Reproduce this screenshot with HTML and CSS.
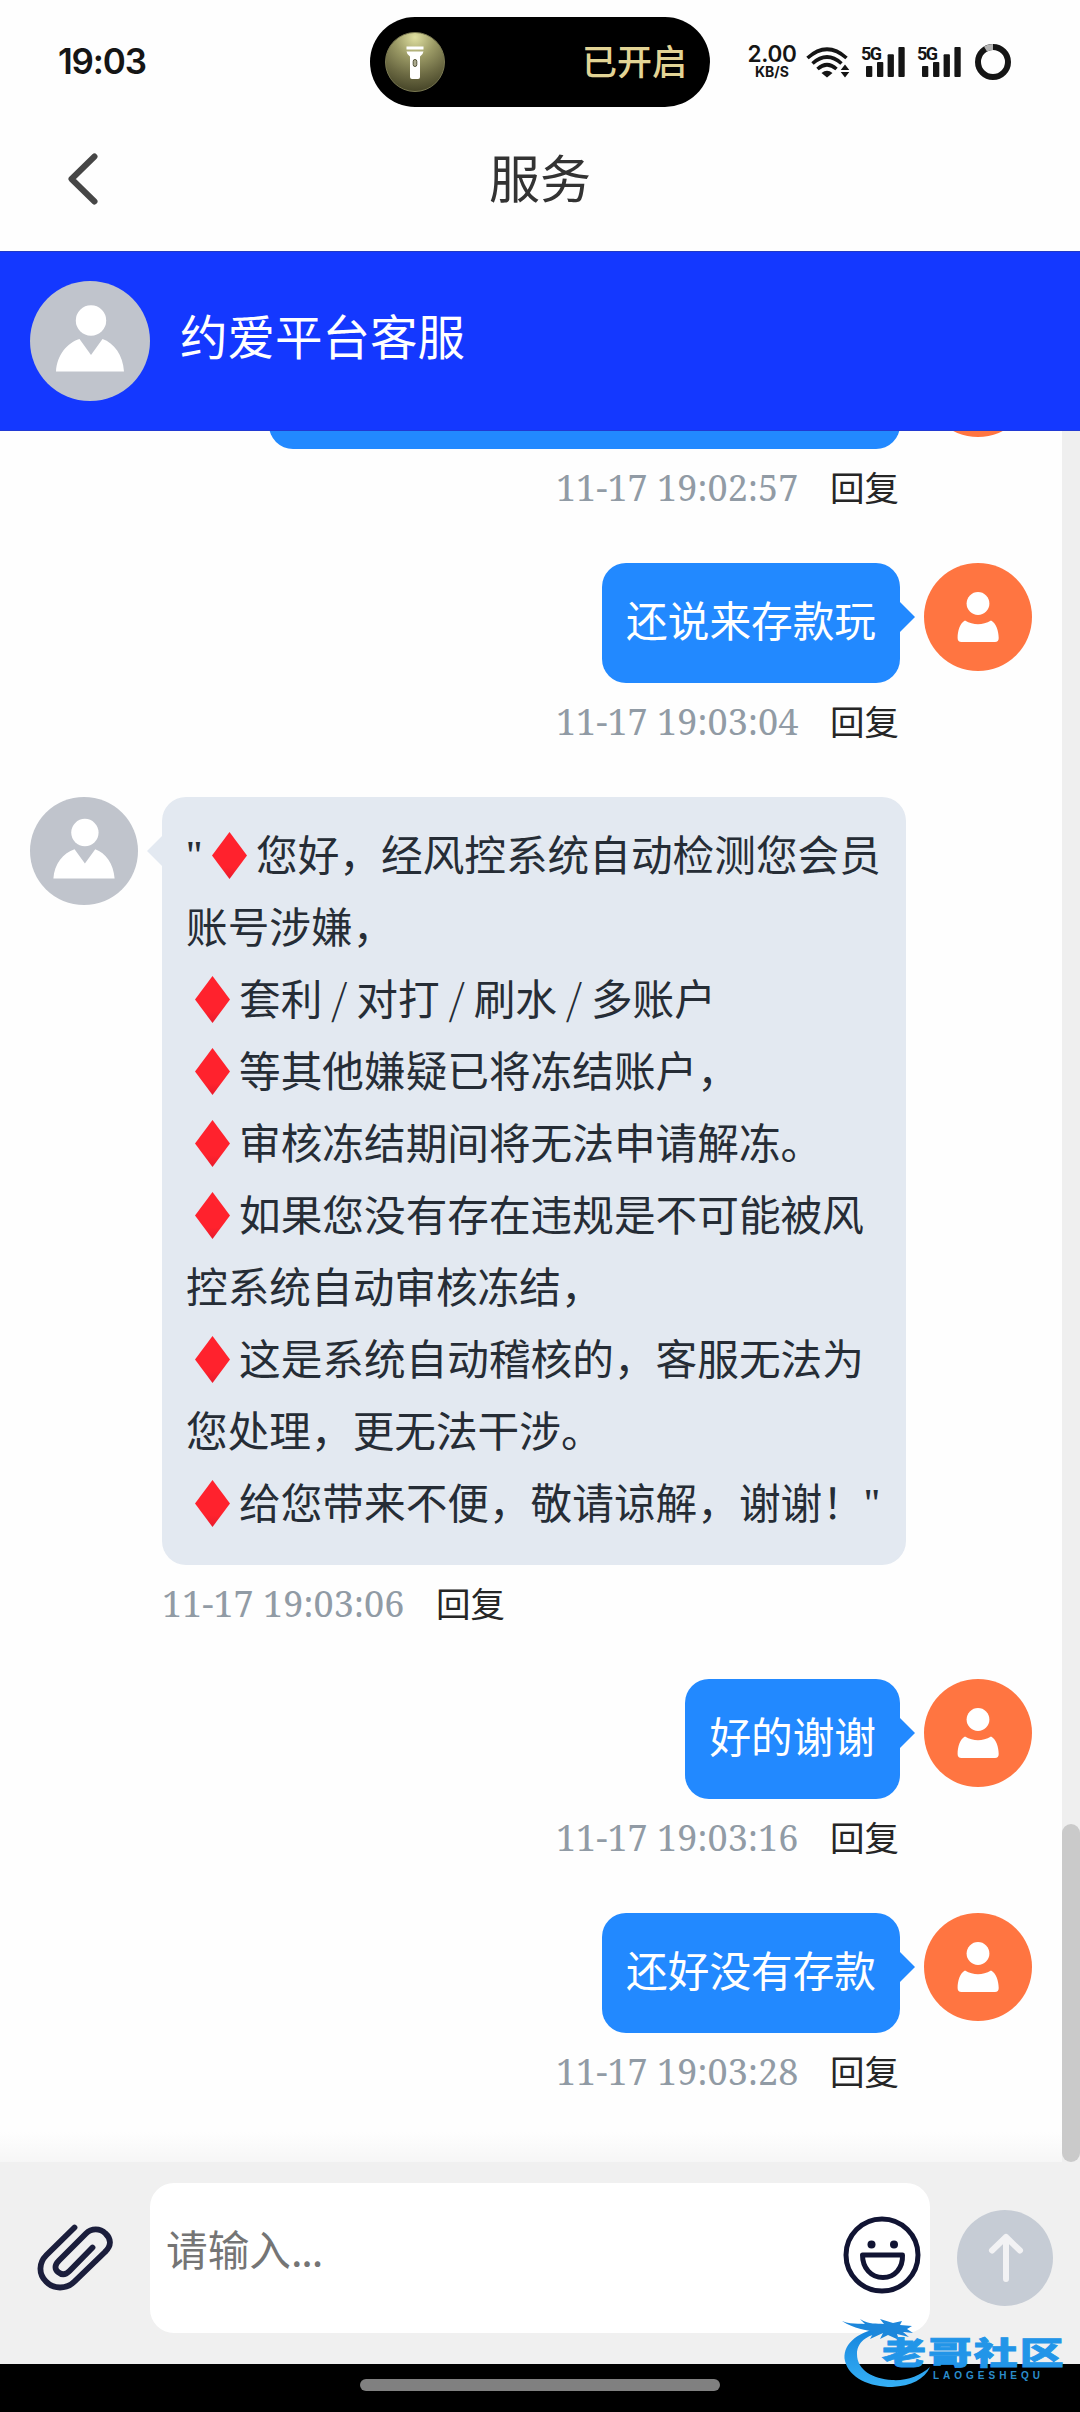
FILE: index.html
```html
<!DOCTYPE html>
<html lang="zh-CN">
<head>
<meta charset="utf-8">
<title>服务</title>
<link rel="stylesheet" href="styles.css">
</head>
<body>
<svg class="defs" aria-hidden="true">
  <symbol id="agent" viewBox="0 0 120 120">
    <circle cx="60" cy="60" r="60" fill="#c0c4cc"/>
    <circle cx="61" cy="39.5" r="15.2" fill="#fff"/>
    <path d="M26 90.500C27 74 37 62 49.500 58L61 74L72.500 58C84 62 93 74 94 90.500Z" fill="#fff"/>
  </symbol>
  <symbol id="user" viewBox="0 0 108 108">
    <circle cx="54" cy="54" r="54" fill="#ff7541"/>
    <circle cx="54" cy="40.500" r="11.400" fill="#fff"/>
    <path d="M41 57.500Q54 65 67 57.500C72 60 74.700 68 74.700 75Q74.700 79 71 79H37.500Q33.600 79 33.600 75C33.600 68 36 60 41 57.500Z" fill="#fff"/>
  </symbol>
  <symbol id="signal" viewBox="0 0 39 30">
    <g fill="#151515">
      <rect x="0" y="19" width="6.300" height="11" rx="1"/>
      <rect x="11" y="15" width="6.300" height="15" rx="1"/>
      <rect x="21.600" y="7.300" width="6.300" height="22.700" rx="1"/>
      <rect x="32.400" y="0" width="6.300" height="30" rx="1"/>
    </g>
  </symbol>
</svg>
<div class="screen">
  <header class="status">
    <div class="clock">19:03</div>
    <div class="island">
      <svg class="torch" viewBox="0 0 60 60">
        <defs>
          <radialGradient id="glow" cx=".5" cy=".08" r="1"><stop offset="0" stop-color="#dfdfa0"/><stop offset=".35" stop-color="#9a9965"/><stop offset=".65" stop-color="#6c6a43"/><stop offset="1" stop-color="#3b3a20"/></radialGradient>
        </defs>
        <circle cx="30" cy="30" r="29.500" fill="url(#glow)" stroke="#7a7952"/>
        <path d="M21.500 14.500H38.500V17.500H21.500ZM21.500 19.500H38.500Q38.300 22 35 24.500V45Q35 47 33 47H27Q25 47 25 45V24.500Q21.700 22 21.500 19.500Z" fill="#fff"/>
        <rect x="28.200" y="27.500" width="3.600" height="7" rx="1.800" fill="#aaa98d" stroke="#55543a"/>
      </svg>
      <span>已开启</span>
    </div>
    <div class="speed"><b>2.00</b><i>KB/S</i></div>
    <svg class="wifi" viewBox="0 0 46 34">
      <g fill="none" stroke="#151515" stroke-width="3.600">
        <path d="M1.500 12Q21 -5.500 40.500 12"/>
        <path d="M6.500 17.500Q21 4.500 35.500 17.500"/>
        <path d="M11.500 23Q21 14.500 30.500 23"/>
      </g>
      <path d="M15.500 27Q21 22.500 26.500 27L21 31.500ZM39 18.500L43.300 24H34.700ZM39 31.500L43.300 26H34.700Z" fill="#151515"/>
    </svg>
    <div class="cell"><svg><use href="#signal"/></svg><span>5G</span></div>
    <div class="cell"><svg><use href="#signal"/></svg><span>5G</span></div>
    <svg class="ring" viewBox="0 0 36 36"><circle cx="18" cy="18" r="15" fill="none" stroke="#151515" stroke-width="6"/><path d="M10.500 5A15 15 0 0 1 18 3" fill="none" stroke="#b4b4b4" stroke-width="6"/></svg>
  </header>

  <nav class="titlebar">
    <svg class="back" viewBox="0 0 30 52"><path d="M26.500 3.500L3.500 26L26.500 48.500" fill="none" stroke="#464646" stroke-width="6" stroke-linecap="round" stroke-linejoin="round"/></svg>
    <h1>服务</h1>
  </nav>

  <section class="agentbar">
    <svg><use href="#agent"/></svg>
    <span>约爱平台客服</span>
  </section>

  <main class="chat">
    <div class="messages">
      <article class="msg mine">
        <div class="row"><div class="bubble long"></div><svg class="avatar"><use href="#user"/></svg></div>
        <div class="meta"><time>11-17 19:02:57</time><span>回复</span></div>
      </article>
      <article class="msg mine">
        <div class="row"><div class="bubble">还说来存款玩</div><svg class="avatar"><use href="#user"/></svg></div>
        <div class="meta"><time>11-17 19:03:04</time><span>回复</span></div>
      </article>
      <article class="msg theirs">
        <div class="row">
          <svg class="avatar"><use href="#agent"/></svg>
          <div class="bubble">
            <p><q>"</q><i class="gem"></i>您好，经风控系统自动检测您会员</p>
            <p>账号涉嫌，</p>
            <p><i class="gem"></i>套利<s>/</s>对打<s>/</s>刷水<s>/</s>多账户</p>
            <p><i class="gem"></i>等其他嫌疑已将冻结账户，</p>
            <p><i class="gem"></i>审核冻结期间将无法申请解冻。</p>
            <p><i class="gem"></i>如果您没有存在违规是不可能被风</p>
            <p>控系统自动审核冻结，</p>
            <p><i class="gem"></i>这是系统自动稽核的，客服无法为</p>
            <p>您处理，更无法干涉。</p>
            <p><i class="gem"></i>给您带来不便，敬请谅解，谢谢！<q>"</q></p>
          </div>
        </div>
        <div class="meta"><time>11-17 19:03:06</time><span>回复</span></div>
      </article>
      <article class="msg mine">
        <div class="row"><div class="bubble">好的谢谢</div><svg class="avatar"><use href="#user"/></svg></div>
        <div class="meta"><time>11-17 19:03:16</time><span>回复</span></div>
      </article>
      <article class="msg mine">
        <div class="row"><div class="bubble">还好没有存款</div><svg class="avatar"><use href="#user"/></svg></div>
        <div class="meta"><time>11-17 19:03:28</time><span>回复</span></div>
      </article>
    </div>
    <div class="track"><div class="thumb"></div></div>
  </main>

  <footer class="composer">
    <svg class="clip" viewBox="33.500 2221 82 74"><path d="M74 2227.500L46 2255C38 2263 38 2274 45.500 2281.500C53 2289.500 66 2289.500 74 2281.500L104.500 2252C111 2246 111 2239 105 2233.500C99.500 2228 91 2228 85.500 2233.500L58.500 2260.500C54 2265 54 2269 57.500 2272C61 2275 65 2275 69 2271L92 2247.500" fill="none" stroke="#1b1e3c" stroke-width="5.800" stroke-linecap="round"/></svg>
    <div class="field">
      <span>请输入<em>...</em></span>
      <svg class="smile" viewBox="0 0 78 78" fill="none" stroke="#111433" stroke-width="5">
        <circle cx="39" cy="39" r="36"/>
        <path d="M19.500 39H59.500C60 52 52 61.500 40 61.500C28 61.500 19.500 52 19.500 39Z" stroke-linejoin="round"/>
        <circle cx="28.500" cy="28.500" r="4" fill="#111433" stroke="none"/><circle cx="51" cy="28.500" r="4" fill="#111433" stroke="none"/>
      </svg>
    </div>
    <svg class="send" viewBox="0 0 96 96"><circle cx="48" cy="48" r="48" fill="#c6ccd5"/><path d="M49 69V27M35 40.500L49 27L63 40.500" fill="none" stroke="#f2f2f4" stroke-width="6" stroke-linecap="round" stroke-linejoin="round"/></svg>
  </footer>
  <div class="homebar"><div></div></div>

  <svg class="brand" viewBox="0 0 226 76">
    <defs><linearGradient id="sea" x1="0" y1="0" x2="0" y2="1"><stop offset="0" stop-color="#1583dc"/><stop offset="1" stop-color="#35b0f6"/></linearGradient></defs>
    <path d="M40 12C14 16 1 30 4 45C8 62 29 71 51 71C70 70 84 63 89 51C79 60 65 65 51 64C32 63 16 54 16 38C16 27 25 18 43 17Z" fill="url(#sea)"/>
    <path d="M1 5C10 9 17 7 24 8L19 3C29 9 35 7 43 8L39 3L52 7L61 5L59 9L71 10L66 13L72 17L62 16L68 21L56 18L58 24L47 19L39 23L42 17L29 23L33 16C26 14 13 13 1 5Z" fill="#1d87db"/>
    <text class="brand-cn" transform="translate(41 48) scale(1.42 1)" x="0" y="0" textLength="128">老哥社区</text>
    <text class="brand-en" x="92" y="62.500" textLength="107">LAOGESHEQU</text>
  </svg>
</div>
</body>
</html>
```
FILE: styles.css
```css
* { box-sizing: border-box; }
body {
  margin: 0;
  background: #fefefe;
  font-family: "Noto Sans CJK SC", sans-serif;
}
.defs { position: absolute; width: 0; height: 0; }
.screen {
  position: relative;
  width: 1080px;
  height: 2412px;
  overflow: hidden;
  display: flex;
  flex-direction: column;
}
svg { display: block; flex: none; }

/* System status bar */
.status {
  height: 124px;
  flex: none;
  display: flex;
  align-items: flex-start;
  color: #151515;
  font-family: Inter, sans-serif;
}
.status > * { flex: none; }
.clock {
  width: 370px;
  padding: 40px 0 0 58px;
  font-size: 35px;
  line-height: 42px;
  font-weight: 600;
  letter-spacing: -1.2px;
}
.island {
  width: 340px;
  height: 90px;
  margin-top: 17px;
  padding: 0 23px 0 15px;
  border-radius: 45px;
  background: #000;
  display: flex;
  align-items: center;
  justify-content: space-between;
  color: #e2d495;
  font: 500 35px/60px "Noto Sans CJK SC", sans-serif;
}
.island span { margin-top: -4px; }
.torch { width: 60px; height: 60px; }
.speed {
  width: 56px;
  margin: 43px 0 0 34px;
  display: flex;
  flex-direction: column;
  align-items: center;
}
.speed b { font-size: 22.500px; line-height: 22px; font-weight: 600; letter-spacing: -.3px; }
.speed i { font-size: 14px; line-height: 14px; font-weight: 700; font-style: normal; }
.wifi { width: 46px; height: 34px; margin: 46px 0 0 6px; }
.cell { position: relative; width: 45px; height: 31px; margin: 47px 0 0 9px; }
.cell svg { width: 39px; height: 30px; margin-left: 5px; }
.cell span {
  position: absolute;
  left: 0;
  top: -2px;
  font: 700 18px/18px Roboto, sans-serif;
  letter-spacing: -1.5px;
}
.cell + .cell { margin-left: 11px; }
.ring { width: 36px; height: 36px; margin: 44px 0 0 13px; }

/* Page title */
.titlebar {
  height: 127px;
  flex: none;
  display: grid;
  grid-template-columns: 98px 1fr 98px;
  align-items: center;
  padding-bottom: 17px;
}
.back { width: 30px; height: 52px; justify-self: end; }
.titlebar h1 {
  margin: -6px 0 0;
  text-align: center;
  font-size: 51px;
  line-height: 60px;
  font-weight: 400;
  color: #333;
}

/* Agent header */
.agentbar {
  height: 180px;
  flex: none;
  padding: 0 30px;
  display: flex;
  align-items: center;
  gap: 30px;
  background: #1438ff;
  border-top: 1px solid #2139c4;
  border-bottom: 1px solid #2139d4;
  color: #fff;
  font-size: 47.500px;
}
.agentbar svg { width: 120px; height: 120px; }
.agentbar span { line-height: 60px; margin-top: -12px; }

/* Conversation */
.chat {
  height: 1731px;
  flex: none;
  display: flex;
  overflow: hidden;
}
.messages {
  flex: 1;
  display: flex;
  flex-direction: column;
  justify-content: flex-end;
  padding: 0 30px 15px;
  background: linear-gradient(to top, #f6f6f6, #fefefe 30px);
}
.msg { flex: none; margin-bottom: 34px; }
.row { display: flex; gap: 24px; align-items: flex-start; }
.mine .row { justify-content: flex-end; }
.avatar { width: 108px; height: 108px; }
.bubble {
  position: relative;
  padding: 20px 24px 28px;
  border-radius: 24px;
  font-size: 41.670px;
  line-height: 72px;
  min-height: 120px;
  white-space: nowrap;
}
.mine .bubble { background: #2289ff; color: #fff; }
.theirs .bubble { width: 744px; background: #e3e9f1; color: #262d36; }
.bubble::after {
  content: "";
  position: absolute;
  top: 39px;
  border: 15px solid transparent;
}
.mine .bubble::after { left: 100%; border-left-color: #2289ff; border-right: 0; }
.theirs .bubble::after { right: 100%; border-right-color: #e3e9f1; border-left: 0; }
.bubble.long { width: 631px; }
.bubble p { margin: 0; height: 72px; }
.gem {
  display: inline-block;
  width: 35px;
  height: 47px;
  margin: 0 9px;
  vertical-align: -8px;
  background: linear-gradient(to bottom, #ff222d 75%, #e81b2c);
  clip-path: polygon(50% 0, 100% 50%, 50% 100%, 0 50%);
}
.bubble q { quotes: none; display: inline-block; width: 17px; font-family: "Noto Serif", serif; font-size: 40px; }
.bubble q::before, .bubble q::after { content: none; }
.bubble s { display: inline-block; width: 34px; text-align: center; text-decoration: none; font-weight: 300; }
.meta {
  height: 80px;
  display: flex;
  align-items: center;
  gap: 32px;
  font-size: 34.500px;
  line-height: 40px;
  color: #262626;
}
.meta span { margin-top: -6px; }
.mine .meta { justify-content: flex-end; padding-right: 133px; }
.theirs .meta { padding-left: 132px; }
.meta time {
  font-family: "Noto Serif", "Liberation Serif", serif;
  font-size: 36px;
  width: 242px;
  margin-top: -2px;
  white-space: nowrap;
  color: #919ba5;
}
.track { width: 18px; background: #efefef; display: flex; flex-direction: column; justify-content: flex-end; }
.thumb { height: 338px; border-radius: 9px; background: #cacaca; }

/* Message composer */
.composer {
  height: 202px;
  flex: none;
  padding: 21px 27px 31px 34px;
  display: flex;
  align-items: center;
  background: #f0f0f0;
}
.clip { width: 82px; height: 74px; }
.field {
  width: 780px;
  height: 150px;
  margin: 0 27px 0 34px;
  padding: 0 9.500px 0 16px;
  border-radius: 24px;
  background: #fff;
  display: flex;
  align-items: center;
  justify-content: space-between;
  color: #757575;
  font-size: 41.670px;
}
.field span { margin-top: -21px; }
.field em { font-style: normal; letter-spacing: -1.2px; }
.smile { width: 78px; height: 78px; margin-top: -7px; }
.send { width: 96px; height: 96px; }
.homebar {
  height: 48px;
  flex: none;
  background: #000;
  display: flex;
  justify-content: center;
  padding-top: 15px;
}
.homebar div { width: 360px; height: 12px; border-radius: 6px; background: #808080; }

/* Community mark over the lower right corner */
.brand {
  position: absolute;
  left: 841px;
  top: 2316px;
  width: 226px;
  height: 76px;
  overflow: visible;
}
.brand-cn { font-size: 31px; font-weight: 900; fill: #2295e8; stroke: #2295e8; stroke-width: .8px; }
.brand-en { font: 700 10px "Liberation Sans", sans-serif; fill: #2b8dcc; }
```
